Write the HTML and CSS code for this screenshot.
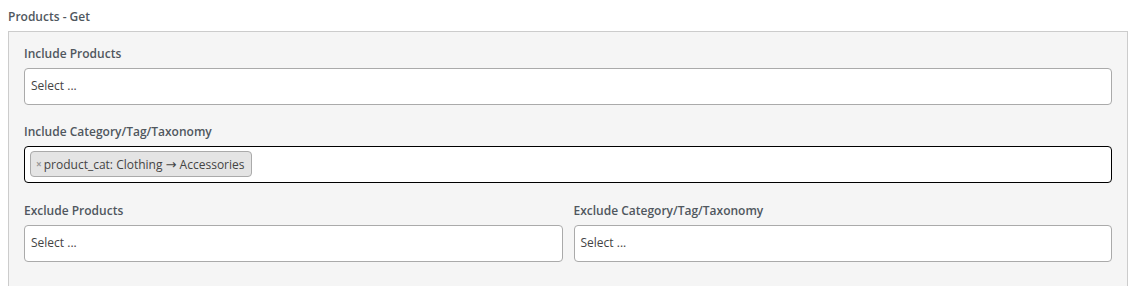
FILE: index.html
```html
<!DOCTYPE html>
<html lang="en">
<head>
	<meta charset="UTF-8">
	<title>Products - Get</title>
	<link rel="stylesheet" href="styles.css">
</head>
<body>
	<div class="title">Products - Get</div>
	<div class="panel">
		<div class="field">
			<label>Include Products</label>
			<div class="select">Select ...</div>
		</div>
		<div class="field">
			<label>Include Category/Tag/Taxonomy</label>
			<div class="select focused">
				<span class="tag"><span class="remove">×</span>product_cat: Clothing <span class="arrow">→</span> Accessories</span>
			</div>
		</div>
		<div class="row">
			<div class="field">
				<label>Exclude Products</label>
				<div class="select">Select ...</div>
			</div>
			<div class="field">
				<label>Exclude Category/Tag/Taxonomy</label>
				<div class="select">Select ...</div>
			</div>
		</div>
	</div>
</body>
</html>
```

FILE: styles.css
```css
*{
	margin: 0;
	padding: 0;
	box-sizing: border-box;
}
body{
	margin: 8px;
	font-family: "Open Sans", "Noto Sans", sans-serif;
	font-size: 12px;
	color: #50575e;
	background: #fff;
	overflow: hidden;
}
.title{
	font-weight: 600;
	line-height: 18px;
	margin-bottom: 5px;
}
.panel{
	width: 1120px;
	border: 1px solid #ccc;
	background-color: #f5f5f5;
	padding: 13px 15px 30px;
	display: flex;
	flex-direction: column;
	gap: 18px;
}
.field{
	display: flex;
	flex-direction: column;
	gap: 5px;
	flex: 1;
}
.field label{
	font-weight: 600;
	line-height: 18px;
}
.row{
	display: flex;
	gap: 11px;
	margin-top: 1px;
}
.select{
	height: 37px;
	background: #fff;
	border: 1px solid #aaa;
	border-radius: 4px;
	padding: 0 6px 3px;
	display: flex;
	align-items: center;
	color: #444;
}
.select.focused{
	border-color: #000;
	padding: 0 5px 1px;
}
.tag{
	display: inline-flex;
	align-items: center;
	height: 26px;
	padding: 0 6px 0 5px;
	background: #e4e4e4;
	border: 1px solid #aaa;
	border-radius: 4px;
	color: #444;
	white-space: pre;
}
.tag .remove{
	color: #999;
	font-weight: bold;
	font-size: 10px;
	margin-right: 2px;
}
.tag .arrow{
	font-family: "DejaVu Sans", sans-serif;
	font-size: 13px;
}
```
